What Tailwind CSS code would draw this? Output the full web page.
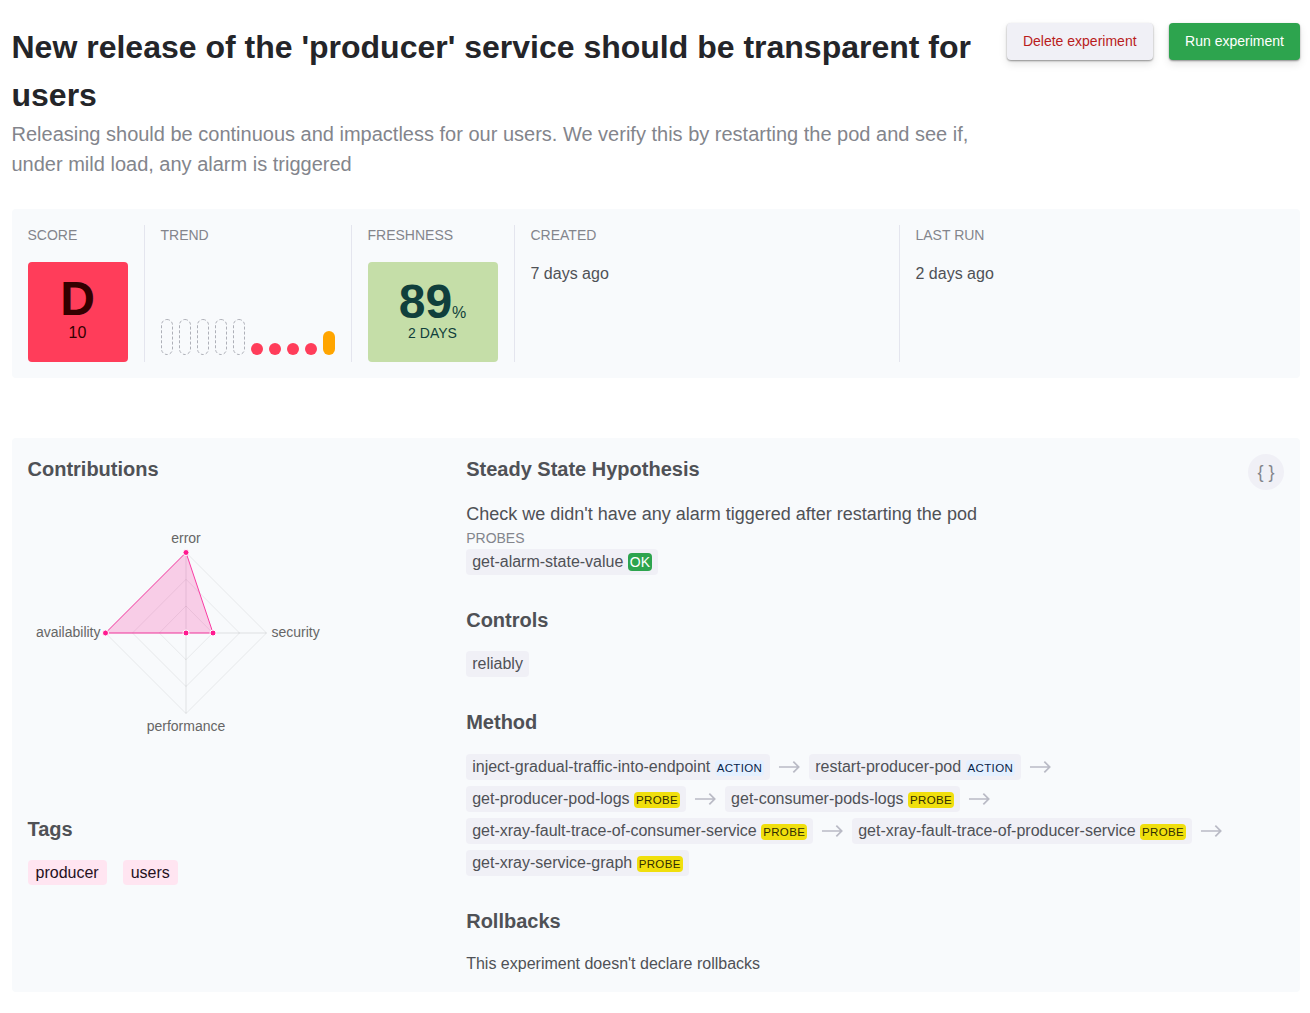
<!DOCTYPE html>
<html lang="en">
<head>
<meta charset="utf-8">
<title>Experiment</title>
<script src="https://cdn.jsdelivr.net/npm/@tailwindcss/browser@4"></script>
</head>
<body class="bg-white font-['Liberation_Sans',Arial,sans-serif] text-base text-[#4f5156]">
<svg class="hidden"><symbol id="arrow" viewBox="0 0 24 24"><path d="M1 12h20.5M16 6.4l5.6 5.6-5.6 5.6" fill="none" stroke="#b9bac5" stroke-width="1.8"/></symbol></svg>
<main class="pl-[11.5px] pr-[10px] pt-[23px]">
  <header class="flex items-start justify-between">
    <div class="w-[966px]">
      <h1 class="text-[32px] leading-[48px] font-bold text-[#242529]">New release of the 'producer' service should be transparent for users</h1>
      <p class="text-xl leading-[30px] text-[#83858c]">Releasing should be continuous and impactless for our users. We verify this by restarting the pod and see if, under mild load, any alarm is triggered</p>
    </div>
    <div class="flex gap-4 text-sm leading-[21px]">
      <button class="h-[37px] w-[146.5px] rounded bg-[#f0f0f6] text-[#b91c1c] shadow-[0_4px_8px_rgba(0,0,0,0.1),0_1px_2px_rgba(0,0,0,0.4)]">Delete experiment</button>
      <button class="h-[37px] w-[131px] rounded bg-[#2da44e] text-white shadow-[0_4px_8px_rgba(0,0,0,0.1),0_1px_2px_rgba(0,0,0,0.4)]">Run experiment</button>
    </div>
  </header>

  <section class="mt-[30px] flex h-[169px] rounded bg-[#f8fafc] py-4 pl-4">
    <div class="w-[117px] border-r border-[#e4e5ee]">
      <h2 class="text-sm leading-[21px] text-[#83858c]">SCORE</h2>
      <div class="mt-4 flex h-[100px] w-[100px] flex-col items-center rounded bg-[#ff3d5a] pt-[13px] text-[#300]">
        <span class="text-5xl leading-[48px] font-bold">D</span>
        <span class="text-base leading-[19px]">10</span>
      </div>
    </div>
    <div class="flex w-[207px] flex-col border-r border-[#e4e5ee] pl-4">
      <h2 class="text-sm leading-[21px] text-[#83858c]">TREND</h2>
      <div class="mt-auto mb-[7px] flex items-end gap-1.5">
        <svg class="h-9 w-[84px]" viewBox="0 0 84 36" fill="none" stroke="#aeb0b8" stroke-dasharray="3 2"><rect x=".5" y=".5" width="11" height="35" rx="5.5"/><rect x="18.5" y=".5" width="11" height="35" rx="5.5"/><rect x="36.5" y=".5" width="11" height="35" rx="5.5"/><rect x="54.5" y=".5" width="11" height="35" rx="5.5"/><rect x="72.5" y=".5" width="11" height="35" rx="5.5"/></svg>
        <i class="size-3 rounded-full bg-[#ff3d5a]"></i>
        <i class="size-3 rounded-full bg-[#ff3d5a]"></i>
        <i class="size-3 rounded-full bg-[#ff3d5a]"></i>
        <i class="size-3 rounded-full bg-[#ff3d5a]"></i>
        <i class="h-6 w-3 rounded-full bg-[#ffa500]"></i>
      </div>
    </div>
    <div class="w-[163px] border-r border-[#e4e5ee] pl-4">
      <h2 class="text-sm leading-[21px] text-[#83858c]">FRESHNESS</h2>
      <div class="mt-4 flex h-[100px] w-[130px] flex-col items-center rounded bg-[#c5dea8] pt-4 text-[#103f3c]">
        <div class="flex h-[47px] items-baseline"><b class="text-5xl leading-[48px]">89</b><span class="leading-4">%</span></div>
        <span class="text-sm leading-[17px]">2 DAYS</span>
      </div>
    </div>
    <div class="w-[385px] border-r border-[#e4e5ee] pl-4">
      <h2 class="text-sm leading-[21px] text-[#83858c]">CREATED</h2>
      <p class="mt-4 leading-6">7 days ago</p>
    </div>
    <div class="flex-1 pl-4">
      <h2 class="text-sm leading-[21px] text-[#83858c]">LAST RUN</h2>
      <p class="mt-4 leading-6">2 days ago</p>
    </div>
  </section>

  <section class="mt-[60px] flex h-[554px] rounded bg-[#f8fafc] p-4">
    <div class="w-[438.7px]">
      <h2 class="text-xl leading-[30px] font-bold">Contributions</h2>
      <svg class="mt-[34px] h-[222px] w-[316px] text-sm" viewBox="28 518 316 222" fill="#666">
        <g fill="none" stroke="#000" stroke-opacity=".07">
          <path d="M186 606l26.7 27-26.7 26.7-26.7-26.7zM186 579.3l53.5 53.7-53.5 53.5-53.5-53.5zM186 552.5l80.5 80.5-80.5 80.5-80.5-80.5z"/>
          <path stroke-width="1.4" d="M186 552.5v161M105.5 633h161"/>
        </g>
        <path d="M186 552.5l27 80.5H105.5z" fill="#f81894" fill-opacity=".2" stroke="#fa3ca3"/>
        <g fill="#ff1a90" stroke="#fff"><circle cx="186" cy="552.5" r="3"/><circle cx="213" cy="633" r="3"/><circle cx="186" cy="633" r="3"/><circle cx="105.5" cy="633" r="3"/></g>
        <text x="186" y="543" text-anchor="middle">error</text>
        <text x="271.5" y="637">security</text>
        <text x="186" y="731" text-anchor="middle">performance</text>
        <text x="100.5" y="637" text-anchor="end">availability</text>
      </svg>
      <h2 class="mt-[74px] text-xl leading-[30px] font-bold">Tags</h2>
      <div class="mt-4 flex gap-4 text-[#26101c]">
        <span class="h-[25px] rounded bg-[#ffe5f1] px-2 leading-[25px]">producer</span>
        <span class="h-[25px] rounded bg-[#ffe5f1] px-2 leading-[25px]">users</span>
      </div>
    </div>
    <div class="flex-1">
      <div class="flex justify-between">
        <h2 class="text-xl leading-[30px] font-bold">Steady State Hypothesis</h2>
        <button class="-mb-9 size-9 rounded-full bg-[#f0f0f6] text-lg leading-[27px] text-[#83858c]">{ }</button>
      </div>
      <p class="mt-[17px] text-lg leading-[27px]">Check we didn't have any alarm tiggered after restarting the pod</p>
      <h3 class="text-sm leading-[21px] text-[#83858c]">PROBES</h3>
      <div class="flex"><span class="h-[26px] rounded bg-[#f0f0f6] px-1.5 leading-[25px]">get-alarm-state-value <span class="rounded bg-[#2da44e] px-0.5 py-px text-sm leading-none text-white">OK</span></span></div>
      <h2 class="mt-[30px] text-xl leading-[30px] font-bold">Controls</h2>
      <div class="mt-4 flex"><span class="h-[26px] rounded bg-[#f0f0f6] px-1.5 leading-[25px]">reliably</span></div>
      <h2 class="mt-[30px] text-xl leading-[30px] font-bold">Method</h2>
      <div class="mt-[17px] flex flex-col gap-1.5">
        <div class="flex h-[26px] items-center">
          <span class="h-[26px] rounded bg-[#f0f0f6] px-1.5 leading-[25px]">inject-gradual-traffic-into-endpoint <span class="rounded bg-[#e4f0ff] px-0.5 py-0.5 text-[11.5px] leading-none tracking-[0.35px] text-[#06234a]">ACTION</span></span>
          <svg class="mx-2 h-6 w-[23px]"><use href="#arrow"/></svg>
          <span class="h-[26px] rounded bg-[#f0f0f6] px-1.5 leading-[25px]">restart-producer-pod <span class="rounded bg-[#e4f0ff] px-0.5 py-0.5 text-[11.5px] leading-none tracking-[0.35px] text-[#06234a]">ACTION</span></span>
          <svg class="mx-2 h-6 w-[23px]"><use href="#arrow"/></svg>
        </div>
        <div class="flex h-[26px] items-center">
          <span class="h-[26px] rounded bg-[#f0f0f6] px-1.5 leading-[25px]">get-producer-pod-logs <span class="rounded bg-[#f0df0d] px-0.5 py-0.5 text-[11.5px] leading-none tracking-[0.35px] text-[#302d03]">PROBE</span></span>
          <svg class="mx-2 h-6 w-[23px]"><use href="#arrow"/></svg>
          <span class="h-[26px] rounded bg-[#f0f0f6] px-1.5 leading-[25px]">get-consumer-pods-logs <span class="rounded bg-[#f0df0d] px-0.5 py-0.5 text-[11.5px] leading-none tracking-[0.35px] text-[#302d03]">PROBE</span></span>
          <svg class="mx-2 h-6 w-[23px]"><use href="#arrow"/></svg>
        </div>
        <div class="flex h-[26px] items-center">
          <span class="h-[26px] rounded bg-[#f0f0f6] px-1.5 leading-[25px]">get-xray-fault-trace-of-consumer-service <span class="rounded bg-[#f0df0d] px-0.5 py-0.5 text-[11.5px] leading-none tracking-[0.35px] text-[#302d03]">PROBE</span></span>
          <svg class="mx-2 h-6 w-[23px]"><use href="#arrow"/></svg>
          <span class="h-[26px] rounded bg-[#f0f0f6] px-1.5 leading-[25px]">get-xray-fault-trace-of-producer-service <span class="rounded bg-[#f0df0d] px-0.5 py-0.5 text-[11.5px] leading-none tracking-[0.35px] text-[#302d03]">PROBE</span></span>
          <svg class="mx-2 h-6 w-[23px]"><use href="#arrow"/></svg>
        </div>
        <div class="flex h-[26px] items-center">
          <span class="h-[26px] rounded bg-[#f0f0f6] px-1.5 leading-[25px]">get-xray-service-graph <span class="rounded bg-[#f0df0d] px-0.5 py-0.5 text-[11.5px] leading-none tracking-[0.35px] text-[#302d03]">PROBE</span></span>
        </div>
      </div>
      <h2 class="mt-[30px] text-xl leading-[30px] font-bold">Rollbacks</h2>
      <p class="mt-4 leading-6">This experiment doesn't declare rollbacks</p>
    </div>
  </section>
</main>
</body>
</html>
